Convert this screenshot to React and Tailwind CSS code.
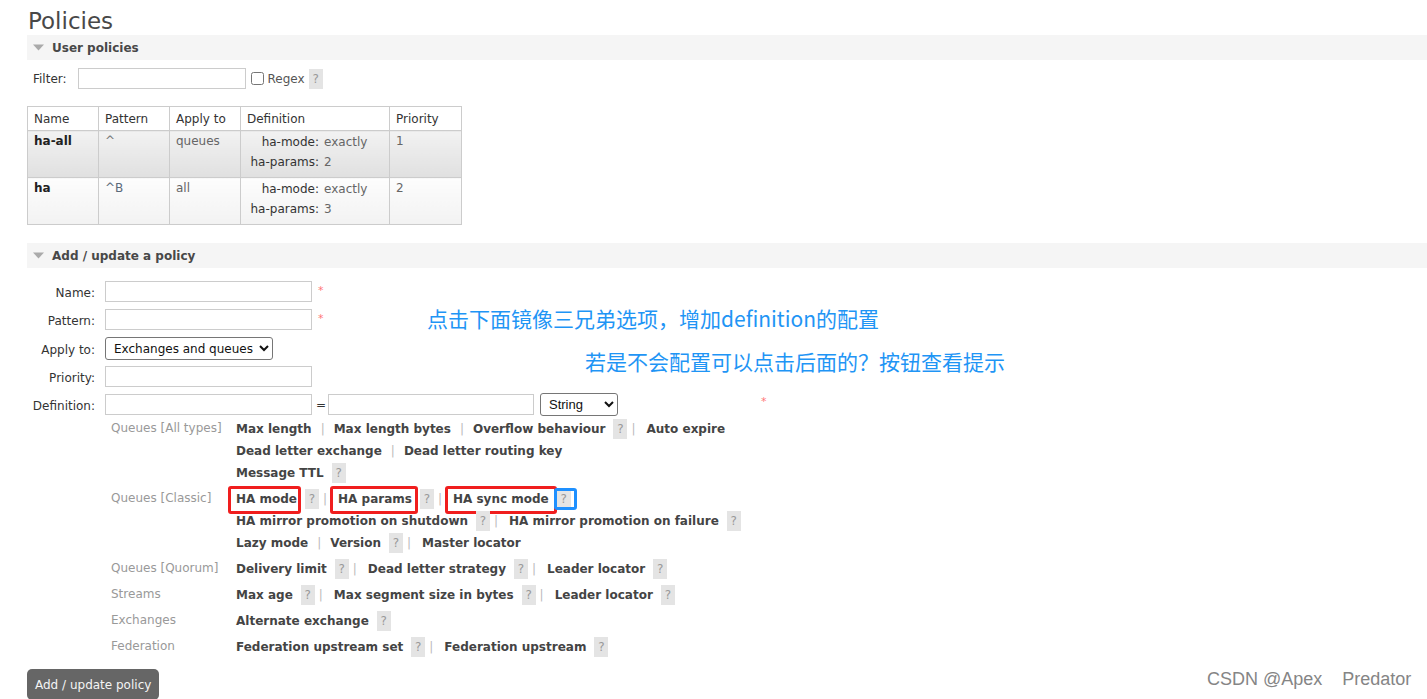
import React from "react";

const groups = [
  {
    label: "Queues [All types]",
    rows: [
      [{ t: "Max length" }, { t: "Max length bytes" }, { t: "Overflow behaviour", h: true }, { t: "Auto expire" }],
      [{ t: "Dead letter exchange" }, { t: "Dead letter routing key" }],
      [{ t: "Message TTL", h: true }],
    ],
  },
  {
    label: "Queues [Classic]",
    rows: [
      [
        { t: "HA mode", h: true, box: "left-[-8px] right-[-4px]" },
        { t: "HA params", h: true, box: "left-[-8px] right-[-6px]" },
        { t: "HA sync mode", h: true, box: "left-[-8px] right-[-8px]", blue: true },
      ],
      [{ t: "HA mirror promotion on shutdown", h: true }, { t: "HA mirror promotion on failure", h: true }],
      [{ t: "Lazy mode" }, { t: "Version", h: true }, { t: "Master locator" }],
    ],
  },
  {
    label: "Queues [Quorum]",
    rows: [[{ t: "Delivery limit", h: true }, { t: "Dead letter strategy", h: true }, { t: "Leader locator", h: true }]],
  },
  {
    label: "Streams",
    rows: [[{ t: "Max age", h: true }, { t: "Max segment size in bytes", h: true }, { t: "Leader locator", h: true }]],
  },
  { label: "Exchanges", rows: [[{ t: "Alternate exchange", h: true }]] },
  { label: "Federation", rows: [[{ t: "Federation upstream set", h: true }, { t: "Federation upstream", h: true }]] },
];

function Help({ className = "", blue = false }) {
  return (
    <span className={`relative inline-flex w-[14px] h-[20px] items-center justify-center bg-[#e4e4e4] text-[#999] text-[12px] font-normal ${className}`}>
      ?
      {blue && (
        <span className="absolute left-[-3px] right-[-6px] top-[-1px] bottom-[-1px] border-[3px] border-[#1e90ff] rounded-[3px]" />
      )}
    </span>
  );
}

function Bar({ title }) {
  return (
    <div className="h-[25px] bg-[#f5f5f5] flex items-center pl-[6px]">
      <svg width="11" height="7" viewBox="0 0 11 7">
        <polygon points="0,0.5 11,0.5 5.5,6.5" fill="#aaaaaa" />
      </svg>
      <span className="ml-[8px] font-bold text-[12px] text-[#484848]">{title}</span>
    </div>
  );
}

function Input({ w = "w-[207px]" }) {
  return <div className={`${w} h-[21px] border border-[#cccccc] bg-white`} />;
}

function Star({ className = "" }) {
  return <span className={`text-[#f77] text-[11px] leading-none self-start ${className}`}>*</span>;
}

function LinkRow({ items }) {
  return (
    <div className="flex items-center h-[22px]">
      {items.map((it, i) => {
        const prevHelp = i > 0 && items[i - 1].h;
        return (
          <React.Fragment key={i}>
            {i > 0 && (
              <span className={`text-[#bbb] text-[12px] ${prevHelp ? "ml-[4px] mr-[11px]" : "mx-[9px]"}`}>|</span>
            )}
            <span className="relative inline-flex h-[22px] items-center font-bold text-[#444]">
              {it.t}
              {it.box && (
                <span className={`absolute ${it.box} top-[-2px] bottom-[-4px] border-[3px] border-[#f01e1e] rounded-[3px]`} />
              )}
            </span>
            {it.h && <Help className="ml-[8px]" blue={it.blue} />}
          </React.Fragment>
        );
      })}
    </div>
  );
}

export default function App() {
  const tdBase = "border border-[#cccccc] align-top pl-[6px] pt-[2px] leading-[16px]";
  const row1 = "bg-linear-to-b from-[#f2f2f2] to-[#e0e0e0]";
  const row2 = "bg-linear-to-b from-[#fdfdfd] to-[#f2f2f2]";
  const Def = ({ p }) => (
    <div className="grid grid-cols-[72px_auto] gap-x-[5px] leading-[20px] -mt-[1px]">
      <span className="text-right text-[#333]">ha-mode:</span>
      <span className="text-[#666] mt-[1px] leading-[19px]">exactly</span>
      <span className="text-right text-[#333]">ha-params:</span>
      <span className="text-[#666] mt-[1px] leading-[19px]">{p}</span>
    </div>
  );

  return (
    <div className="relative w-[1427px] h-[699px] overflow-hidden bg-white font-['DejaVu_Sans',Verdana,sans-serif] text-[12px] text-[#484848] pl-[27px]">
      <h1 className="mt-[7px] h-[28px] leading-[28px] text-[23px] font-normal text-[#484848] pl-px">Policies</h1>

      <Bar title="User policies" />

      <div className="mt-[8px] flex items-center pl-[6px] h-[21px]">
        <span className="text-[#333]">Filter:</span>
        <div className="ml-[11px]">
          <Input w="w-[168px]" />
        </div>
        <input type="checkbox" className="ml-[5px] w-[13px] h-[13px] m-0" readOnly />
        <span className="ml-[4px] text-[#555]">Regex</span>
        <Help className="ml-[4px] h-[19px]" />
      </div>

      <table className="mt-[17px] table-fixed border-collapse w-[434px] text-[12px]">
        <colgroup>
          <col className="w-[71px]" />
          <col className="w-[71px]" />
          <col className="w-[71px]" />
          <col className="w-[149px]" />
          <col className="w-[72px]" />
        </colgroup>
        <thead>
          <tr className="h-[24px] bg-white">
            {["Name", "Pattern", "Apply to", "Definition", "Priority"].map((h) => (
              <th key={h} className="border border-[#cccccc] text-left font-normal pl-[6px] align-middle text-[#333]">
                {h}
              </th>
            ))}
          </tr>
        </thead>
        <tbody>
          <tr className="h-[47px]">
            <td className={`${tdBase} ${row1} font-bold text-[#222]`}>ha-all</td>
            <td className={`${tdBase} ${row1} text-[#777]`}>^</td>
            <td className={`${tdBase} ${row1} text-[#666]`}>queues</td>
            <td className={`${tdBase} ${row1}`}>
              <Def p="2" />
            </td>
            <td className={`${tdBase} ${row1} text-[#666]`}>1</td>
          </tr>
          <tr className="h-[47px]">
            <td className={`${tdBase} ${row2} font-bold text-[#222]`}>ha</td>
            <td className={`${tdBase} ${row2} text-[#5a6a7a]`}>^B</td>
            <td className={`${tdBase} ${row2} text-[#666]`}>all</td>
            <td className={`${tdBase} ${row2}`}>
              <Def p="3" />
            </td>
            <td className={`${tdBase} ${row2} text-[#666]`}>2</td>
          </tr>
        </tbody>
      </table>

      <div className="mt-[18px]">
        <Bar title="Add / update a policy" />
      </div>

      <div className="mt-[13px] flex flex-col text-[#333]">
        <div className="flex items-center h-[21px]">
          <span className="w-[68px] text-right mt-[2px]">Name:</span>
          <div className="ml-[10px]"><Input /></div>
          <Star className="ml-[6px] mt-[4px]" />
        </div>
        <div className="mt-[7px] flex items-center h-[21px]">
          <span className="w-[68px] text-right mt-[2px]">Pattern:</span>
          <div className="ml-[10px]"><Input /></div>
          <Star className="ml-[6px] mt-[4px]" />
        </div>
        <div className="mt-[7px] flex items-center h-[23px]">
          <span className="w-[68px] text-right mt-[2px]">Apply to:</span>
          <select
            className="ml-[10px] h-[23px] w-[168px] border border-[#767676] rounded-[3px] bg-white text-[12px] text-[#111] pl-[4px] font-['DejaVu_Sans',sans-serif]"
            defaultValue="eq"
          >
            <option value="eq">Exchanges and queues</option>
          </select>
        </div>
        <div className="mt-[6px] flex items-center h-[21px]">
          <span className="w-[68px] text-right mt-[2px]">Priority:</span>
          <div className="ml-[10px]"><Input /></div>
        </div>
        <div className="mt-[6px] flex items-center h-[23px]">
          <span className="w-[68px] text-right mt-[2px]">Definition:</span>
          <div className="ml-[10px]"><Input /></div>
          <span className="ml-[4px] w-[12px] text-[#333]">=</span>
          <Input w="w-[206px]" />
          <select
            className="ml-[6px] h-[23px] w-[78px] border border-[#767676] rounded-[3px] bg-white text-[13px] text-[#111] pl-[4px] font-['Liberation_Sans',Arial,sans-serif]"
            defaultValue="s"
          >
            <option value="s">String</option>
          </select>
          <Star className="ml-[143px] mt-[3px]" />
        </div>
      </div>

      <div className="mt-[2px] flex flex-col">
        {groups.map((g, gi) => (
          <div key={gi} className={`flex ${gi > 0 ? "mt-[4px]" : ""}`}>
            <div className="ml-[84px] w-[125px] text-[#999] leading-[20px]">{g.label}</div>
            <div className="flex flex-col">
              {g.rows.map((r, ri) => (
                <LinkRow key={ri} items={r} />
              ))}
            </div>
          </div>
        ))}
      </div>

      <div className="mt-[11px] inline-flex h-[31px] items-center px-[8px] bg-[#666] text-[#f4f4f4] rounded-[5px] text-[12px]">
        Add / update policy
      </div>

      <div className="absolute left-[427px] top-[304px] leading-[28px] text-[21px] text-[#1f95f5] font-['Noto_Sans_CJK_SC',sans-serif] whitespace-nowrap">
        点击下面镜像三兄弟选项，增加definition的配置
      </div>
      <div className="absolute left-[585px] top-[347px] leading-[28px] text-[21px] text-[#1f95f5] font-['Noto_Sans_CJK_SC',sans-serif] whitespace-nowrap">
        若是不会配置可以点击后面的？按钮查看提示
      </div>

      <div className="absolute left-[1207px] top-[667px] leading-[24px] text-[18px] text-[#858585] font-['Liberation_Sans',Arial,sans-serif] whitespace-nowrap">
        CSDN @Apex<span className="ml-[20px]">Predator</span>
      </div>
    </div>
  );
}
